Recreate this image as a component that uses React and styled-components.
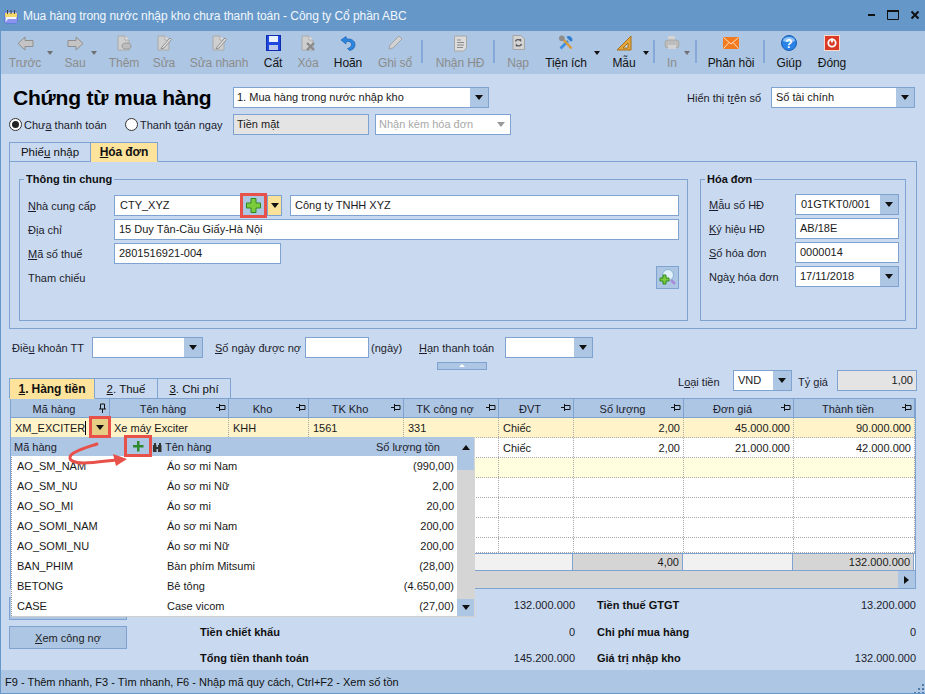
import React from "react";
import styled, { createGlobalStyle } from "styled-components";

const BORDER = "#7ea3d0";
const BAR = "#acc6e3";
const BODY = "#c9daf0";
const RED = "#e8504a";

const Global = createGlobalStyle`
  html, body { margin: 0; padding: 0; background: ${BODY}; }
  * { box-sizing: border-box; }
  u { text-underline-offset: 1px; }
`;

const Win = styled.div`
  width: 925px; height: 694px; display: flex; flex-direction: column; overflow: hidden;
  border-left: 1px solid #6597c8; border-bottom: 1px solid #6597c8;
  background: ${BODY}; color: #1a1a1a;
  font: 11px/14px "Liberation Sans", Arial, sans-serif;
`;
const TitleBar = styled.div`
  height: 31px; flex: none; background: #6597c8; color: #f2f7fd; display: flex; align-items: center;
  padding: 1px 0 0 3px; font-size: 12px; letter-spacing: -.06px;
`;
const TitleText = styled.span` margin-left: 5px; `;
const WinControls = styled.div` margin-left: auto; display: flex; align-items: center; gap: 11px; padding-right: 5px; margin-top: -3px; `;

const Toolbar = styled.div` height: 43px; flex: none; background: ${BAR}; display: flex; `;
const ToolBtn = styled.div`
  position: relative; width: ${p => p.$w}px; margin-left: ${p => p.$ml}px; flex: none;
  display: flex; flex-direction: column; align-items: center; padding-top: 3px;
  color: ${p => (p.$off ? "#8c8c8c" : "#141414")};
`;
const ToolIcon = styled.div` height: 22px; padding-top: 1px; display: flex; align-items: flex-start; justify-content: center; `;
const ToolLabel = styled.div` white-space: nowrap; line-height: 14px; font-size: 12px; letter-spacing: -.1px; `;
const ToolCaret = styled.i`
  position: absolute; left: ${p => p.$x}px; top: 20px; width: 0; height: 0;
  border-left: 3.5px solid transparent; border-right: 3.5px solid transparent;
  border-top: 4px solid ${p => (p.$off ? "#707070" : "#111")};
`;
const ToolSep = styled.div` width: 2px; height: 23px; margin: 9px 0 0 ${p => p.$ml}px; background: #84a9d8; flex: none; `;

const Main = styled.div`
  flex: 1; min-height: 0; padding: 13px 8px 0; display: flex; flex-direction: column;
  & > * { flex-shrink: 0; }
`;
const HeadRow = styled.div` display: grid; grid-template-columns: 224px 256px 1fr; height: 21px; align-items: center; `;
const PageTitle = styled.h1` margin: 0 0 0 4px; font: bold 21px/21px "Liberation Sans", Arial, sans-serif; letter-spacing: -.2px; color: #000; white-space: nowrap; `;
const RightGroup = styled.div` display: flex; justify-content: flex-end; align-items: center; padding-right: 2px; `;
const Label = styled.span`
  display: inline-block; flex: none; white-space: nowrap;
  width: ${p => (p.$w ? `${p.$w}px` : "auto")}; margin-left: ${p => p.$ml || 0}px; color: #1c1c2c;
`;
const PushedLabel = styled(Label)` margin-left: auto; `;
const OptRow = styled.div` display: flex; align-items: center; height: 21px; margin-top: 6px; `;
const Radio = styled.span`
  width: 13px; height: 13px; flex: none; border-radius: 50%; border: 1px solid #333; background: #fff;
  margin-left: ${p => p.$ml || 0}px; margin-right: 2px; display: flex; align-items: center; justify-content: center;
  &::after { content: ""; width: 7px; height: 7px; border-radius: 50%; background: ${p => (p.$on ? "#222" : "transparent")}; }
`;

const Field = styled.div`
  display: flex; align-items: stretch; flex: none; height: ${p => p.$h || 21}px; width: ${p => p.$w}px;
  margin-left: ${p => p.$ml || 0}px; border: 1px solid ${BORDER};
  background: ${p => (p.$gray ? "#e4e4e4" : "#fff")};
  color: ${p => (p.$dim ? "#a8a8a8" : "#1a1a1a")};
`;
const FieldText = styled.span`
  flex: 1; min-width: 0; padding: 0 ${p => (p.$right ? 3 : 4)}px 0 ${p => p.$pl ?? 4}px; line-height: ${p => p.$lh || 19}px;
  white-space: nowrap; overflow: hidden; text-align: ${p => (p.$right ? "right" : "left")};
`;
const Arrow = styled.span`
  width: ${p => p.$w || 18}px; flex: none; background: ${p => p.$bg || BAR}; display: flex; align-items: center; justify-content: center;
  &::after { content: ""; width: 0; height: 0; border-left: 4px solid transparent; border-right: 4px solid transparent; border-top: 5px solid ${p => p.$c || "#111"}; }
`;

const TabStrip = styled.div` display: flex; align-items: flex-end; height: ${p => p.$h || 19}px; margin-top: ${p => p.$mt || 0}px; position: relative; z-index: 1; `;
const Tab = styled.div`
  width: ${p => p.$w}px; height: ${p => p.$h || 20}px; margin-bottom: -1px; display: flex; align-items: center; justify-content: center;
  border: 1px solid ${BORDER}; border-left-width: ${p => (p.$first ? 1 : 0)}px;
  background: ${p => (p.$on ? "#fde39b" : BODY)}; font-weight: ${p => (p.$on ? "bold" : "normal")}; color: #111;
  font-size: ${p => (p.$on ? 12 : 11.5)}px; letter-spacing: ${p => (p.$on ? "-.1px" : "0")};
  ${p => p.$on && "border-bottom-color: #fde39b;"}
`;
const TabPanel = styled.div`
  height: 168px; border: 1px solid ${BORDER}; padding: 17px 9px 0; display: flex; gap: 12px;
`;
const Group = styled.div`
  position: relative; width: ${p => p.$w}px; height: 142px; border: 1px solid ${BORDER};
  padding: ${p => p.$pt}px 8px 0; display: flex; flex-direction: column; gap: 3px;
`;
const Legend = styled.span` position: absolute; left: 4px; top: -8px; padding: 0 2px; background: ${BODY}; font-weight: bold; color: #101010; line-height: 14px; `;
const FormRow = styled.div` display: flex; align-items: center; height: 21px; `;
const AddBox = styled.span`
  width: 27px; height: 25px; margin: -2px 0 -2px -1px; flex: none; border: 3px solid ${RED}; background: ${BAR};
  position: relative; z-index: 1; display: flex; align-items: center; justify-content: center;
`;
const SearchBtn = styled.span`
  width: 23px; height: 23px; margin: -1px 0 -1px auto; border: 1px solid ${BORDER}; background: ${BAR};
  display: flex; align-items: center; justify-content: center;
`;

const PayRow = styled.div` display: flex; align-items: center; height: 21px; margin-top: 8px; padding-left: 3px; `;
const CollapseBar = styled.div`
  width: 50px; height: 8px; margin: 4px 0 0 428px; background: ${BAR}; border: 1px solid ${BORDER}; display: flex; justify-content: center; padding-top: 1px;
  &::after { content: ""; width: 0; height: 0; border-left: 3px solid transparent; border-right: 3px solid transparent; border-bottom: 3px solid #fff; }
`;
const GridHead = styled.div` display: flex; height: 28px; `;
const CurrencyGroup = styled.div` margin-left: auto; display: flex; align-items: flex-start; `;
const CurLabel = styled(Label)` margin-top: 5px; `;

const DataGrid = styled.div`
  position: relative; width: 906px; height: 191px; margin-left: 1px; border: 1px solid ${BORDER}; background: #fff;
`;
const COLS = "99px 119px 80px 95px 95px 75px 110px 110px 121px";
const HeaderRow = styled.div` display: grid; grid-template-columns: ${COLS}; height: 19px; background: ${BAR}; border-bottom: 1px solid ${BORDER}; `;
const HeadCell = styled.div`
  border-right: 1px solid ${BORDER}; position: relative; display: flex; align-items: center; justify-content: center; padding: 1px 12px 0 0; color: #1c1c2c;
`;
const PinWrap = styled.span` position: absolute; right: 2px; top: 4px; display: flex; `;
const Row = styled.div`
  display: grid; grid-template-columns: ${COLS}; height: ${p => p.$h || 20}px; background: ${p => p.$bg || "#fff"};
  border-bottom: 1px dotted #a9a9a9;
`;
const Cell = styled.div`
  position: relative; border-right: 1px dotted #a9a9a9; padding: 0 3px 0 4px; line-height: 21px; white-space: nowrap;
  text-align: ${p => (p.$right ? "right" : "left")}; color: #1a1a1a;
`;
const TextCursor = styled.i` display: inline-block; width: 1px; height: 14px; background: #000; vertical-align: -3px; `;
const CaretBox = styled.span`
  position: absolute; left: 78px; top: -2px; width: 22px; height: 22px; border: 3px solid ${RED}; background: #e6cf85; z-index: 3;
  display: flex; align-items: center; justify-content: center;
  &::after { content: ""; width: 0; height: 0; border-left: 4px solid transparent; border-right: 4px solid transparent; border-top: 5px solid #111; }
`;
const FootRow = styled.div`
  display: grid; grid-template-columns: 562px 110px 110px 121px; height: 18px; border-top: 1px solid ${BORDER}; border-bottom: 1px solid ${BORDER}; 
`;
const FootCell = styled.div`
  background: ${p => (p.$dark ? "#d5d5d5" : "#f1f1f1")}; border-right: 1px solid ${BORDER}; text-align: right; padding-right: 3px; line-height: 16px;
`;
const HScroll = styled.div` height: 17px; background: #d5d5d5; display: flex; justify-content: flex-end; `;
const ScrollBtn = styled.span`
  width: 17px; height: ${p => p.$h || 17}px; flex: none; background: ${BAR}; display: flex; justify-content: center; align-items: ${p => p.$top ? "flex-start" : "center"};
  padding-top: ${p => p.$top ? 8 : 0}px;
  &::after { content: ""; width: 0; height: 0; ${p => p.$dir === "right"
    ? "border-top: 4px solid transparent; border-bottom: 4px solid transparent; border-left: 5px solid #111;"
    : p.$dir === "up"
      ? "border-left: 4px solid transparent; border-right: 4px solid transparent; border-bottom: 5px solid #111;"
      : "border-left: 4px solid transparent; border-right: 4px solid transparent; border-top: 5px solid #111;"} }
`;

const Drop = styled.div`
  position: absolute; left: 0; top: 38px; width: 464px; height: 180px; z-index: 2;
  display: grid; grid-template-columns: 446px 18px; background: #fff; border-bottom: 1px solid #cfcfcf;
`;
const DropMain = styled.div` display: flex; flex-direction: column; border-left: 1px dotted #9a9a9a; `;
const DropHead = styled.div` height: 19px; flex: none; background: ${BAR}; display: flex; align-items: center; padding: 1px 17px 0 3px; margin-left: -1px; color: #1c1c2c; `;
const PlusBox = styled.span`
  width: 28px; height: 22px; margin: -4px 0 -2px; flex: none; border: 3px solid ${RED}; background: ${BAR}; display: flex; align-items: center; justify-content: center;
`;
const DropList = styled.div` flex: 1; `;
const DropRow = styled.div` display: grid; grid-template-columns: 150px 1fr auto; height: 20px; line-height: 20px; padding: 0 3px 0 5px; color: #1a1a1a; `;
const DropScroll = styled.div` display: flex; flex-direction: column; background: #d5d5d5; `;
const Track = styled.div` flex: 1; `;
const Swoosh = styled.svg` position: absolute; left: 55px; top: 4px; z-index: 4; `;

const BottomArea = styled.div` display: flex; height: 81px; `;
const SideButtons = styled.div` width: 118px; flex: none; display: flex; flex-direction: column; gap: 6px; padding-top: 8px; `;
const SideBtn = styled.div` height: 23px; background: ${BAR}; border: 1px solid ${BORDER}; display: flex; align-items: center; justify-content: center; color: #222; `;
const Totals = styled.div`
  margin: 3px 0 0 73px; display: grid; grid-template-columns: 375px 319px; column-gap: 22px; grid-auto-rows: 26.5px; align-items: center;
`;
const TotalItem = styled.div` display: flex; justify-content: space-between; `;
const TotalLabel = styled.span` font-weight: bold; color: #101010; `;
const TotalValue = styled.span` color: #1c1c2c; `;
const StatusBar = styled.div` height: 23px; flex: none; background: ${BAR}; padding-left: 4px; display: flex; align-items: center; position: relative; color: #111; `;
const Grip = styled.svg` position: absolute; right: 1px; bottom: 0; `;

/* ---- drawings ---- */
const Svg = ({ w = 16, h = 16, vb, children }) => <svg width={w} height={h} viewBox={vb || `0 0 ${w} ${h}`}>{children}</svg>;
const G = "#c4c4c4", GS = "#8f8f8f";

const ArrowL = () => <Svg w={17} h={16}><path d="M1 8.500 8 2v3.500h8v6H8V15z" fill={G} stroke={GS} /></Svg>;
const ArrowR = () => <Svg w={17} h={16}><path d="M16 8.500 9 2v3.500H1v6h8V15z" fill={G} stroke={GS} /></Svg>;
const PageBase = ({ children }) => <Svg w={16} h={16}><path d="M2 1h7l4 4v10H2z" fill="#cfcfcf" stroke="#aaa" /><path d="M9 1v4h4" fill="#eee" stroke="#aaa" />{children}</Svg>;
const IcoAdd = () => <PageBase><ellipse cx="10.500" cy="11" rx="4.500" ry="3" fill="#bdbdbd" stroke="#999" /></PageBase>;
const IcoEdit = () => <PageBase><path d="M6 12 14 3l1.500 1.500L8 13l-3 1z" fill="#e2e2e2" stroke="#8f8f8f" /></PageBase>;
const IcoDelete = () => <PageBase><path d="m7 8 7 7m0-7-7 7" stroke="#8a8a8a" strokeWidth="2.400" /></PageBase>;
const IcoSave = () => <Svg w={15} h={16}><rect x=".5" y=".5" width="14" height="15" fill="#2047e0" stroke="#0d2cb0" /><rect x="3" y="1" width="9" height="6" fill="#eaf2ff" /><rect x="3" y="10" width="9" height="5" fill="#b9c8ea" /></Svg>;
const IcoUndo = () => <Svg w={16} h={16}><path d="M6 1.500 1 5l5 4V6.500c3.500-.5 6 1 5.500 3.500-.3 2-2 3-4 3.500l2 2c3.500-.5 5.500-3 5.500-6 0-4-4-6-8.500-5.500z" fill="#2b86de" stroke="#1a5fb4" strokeWidth=".7" /></Svg>;
const IcoPencil = () => <Svg w={16} h={16}><path d="M2 14l1-4 9-9 3 3-9 9z" fill="#d2d2d2" stroke="#a4a4a4" /></Svg>;
const IcoDoc = () => <Svg w={15} h={17}><path d="M1.500 1h12v12l-3 3h-9z" fill="#dcdcdc" stroke="#a8a8a8" /><path d="M4 5h4M4 7.500h7M4 10h7M4 12.500h6" stroke="#8a8a8a" /></Svg>;
const IcoReload = () => <Svg w={13} h={15}><path d="M1 .5h8l3.500 3.500v10.500H1z" fill="#d4d4d4" stroke="#a4a4a4" /><path d="M3.500 6.500c.5-2 3-2.500 5-1v-1.500M9.500 9c-.5 2-3 2.500-5 1v1.500" fill="none" stroke="#5a5a5a" strokeWidth="1.400" /></Svg>;
const IcoTools = () => <Svg w={16} h={16}><path d="M2.500 13.500 10 6" stroke="#3f8fe0" strokeWidth="2.600" /><path d="M9 2.500a3 3 0 0 1 4.500 3.500M13.500 6l-3.500-3.500" stroke="#2f7dd0" strokeWidth="1.800" fill="none" /><path d="m4 3 9.500 10.500" stroke="#d99a3a" strokeWidth="2.400" /><circle cx="3.800" cy="3.200" r="2.800" fill="#8d8d8d" /></Svg>;
const IcoRuler = () => <Svg w={16} h={16}><path d="M15 1v14H1z" fill="#e3a63c" stroke="#a8701a" /><path d="M12 8v5H7z" fill="#c9dbef" stroke="#a8701a" /></Svg>;
const IcoPrinter = () => <Svg w={16} h={15}><path d="M4 1h7v5H4z" fill="#d4d4d4" /><rect x="1" y="5" width="14" height="8" rx="3" fill="#bdbdbd" stroke="#a8a8a8" /><rect x="4" y="10" width="8" height="4" fill="#d2d2d2" /></Svg>;
const IcoMail = () => <Svg w={16} h={14}><g transform="translate(0 2)"><rect width="16" height="12" fill="#f27a1f" /><path d="M.5.500 8 7l7.500-6.500M.5 11.500 6 5.500M15.500 11.500 10 5.500" stroke="#ffe3c4" fill="none" /></g></Svg>;
const IcoHelp = () => <Svg w={16} h={16}><circle cx="8" cy="8" r="7.500" fill="#2a82e6" stroke="#1a5fb4" /><path d="M2 6a6 4 0 0 1 12 0c-3 1.500-9 1.500-12 0z" fill="#8fc4f5" /><text x="8" y="12.500" textAnchor="middle" fontSize="12" fontWeight="bold" fontFamily="Liberation Sans" fill="#fff">?</text></Svg>;
const IcoClose = () => <Svg w={16} h={16}><rect x=".5" y=".5" width="15" height="15" fill="#d93a22" stroke="#fbd9d0" /><circle cx="8" cy="8" r="3.700" fill="none" stroke="#fff" strokeWidth="1.800" /><path d="M8 3.500v4" stroke="#fff" strokeWidth="1.800" /></Svg>;
const Plus = () => <Svg w={17} h={17}><path d="M6 1.500h5v4.500h4.500v5H11v4.500H6V11H1.500V6H6z" fill="#7ccb3d" stroke="#2f8a1e" /></Svg>;
const SmallPlus = () => <Svg w={12} h={12}><path d="M5 1h2.500v4H11.500v2.500H7.500v4H5v-4H1V5h4z" fill="#2f8a2e" /></Svg>;
const Binoc = () => <Svg w={11} h={11}><path d="M1 3h3.500v7H1zM6 3h3.500v7H6zM2 1h2v2H2zM7 1h2v2H7zM4 5h3v2H4z" fill="#333" /></Svg>;
const SearchPlus = () => <Svg w={19} h={19}><circle cx="10" cy="7" r="5.500" fill="#dff0fb" stroke="#8ab4cf" /><path d="M13 12l4 4" stroke="#a78bd8" strokeWidth="2.500" /><path d="M5 7h3v3h3v3H8v3H5v-3H2v-3h3z" fill="#7ccb3d" stroke="#2f8a1e" /></Svg>;
const Pin = ({ v }) => v
  ? <Svg w={9} h={10}><path d="M1 6h7M4.500 6v4M2.500 6V1h4v5" fill="none" stroke="#111" /></Svg>
  : <Svg w={10} h={9}><path d="M0 4.500h3M3.500 1v7M3.500 2.500H9v4H3.500" fill="none" stroke="#111" /></Svg>;
const AppIcon = () => <Svg w={14} h={15}><rect x="1" y="3" width="12" height="11" rx="1" fill="#f4f4ff" stroke="#5a6fe0" /><path d="M1 4h12v4H1z" fill="#f2d76a" /><path d="M3.500 1v4M7 1v4M10.500 1v4" stroke="#444" /><path d="M1 14 4 10h9v4z" fill="#8b93ee" /></Svg>;

const tools = [
  { l: "Trước", w: 44, ml: 2, off: 1, ic: <ArrowL />, c: 43.5 },
  { l: "Sau", w: 34, ml: 11, off: 1, ic: <ArrowR />, c: 32.5 },
  { l: "Thêm", w: 40, ml: 12, off: 1, ic: <IcoAdd /> },
  { l: "Sửa", w: 36, ml: 2, off: 1, ic: <IcoEdit /> },
  { l: "Sửa nhanh", w: 70, ml: 2, off: 1, ic: <IcoEdit /> },
  { l: "Cất", w: 34, ml: 2, ic: <IcoSave /> },
  { l: "Xóa", w: 34, ml: 1, off: 1, ic: <IcoDelete /> },
  { l: "Hoãn", w: 40, ml: 3, ic: <IcoUndo /> },
  { l: "Ghi sổ", w: 46, ml: 4, off: 1, ic: <IcoPencil /> },
  { sep: 3 },
  { l: "Nhận HĐ", w: 64, ml: 5, off: 1, ic: <IcoDoc /> },
  { sep: 1 },
  { l: "Nạp", w: 44, ml: 1, off: 1, ic: <IcoReload /> },
  { l: "Tiện ích", w: 48, ml: 2, ic: <IcoTools />, c: 51.5 },
  { l: "Mẫu", w: 44, ml: 12, ic: <IcoRuler />, c: 41 },
  { sep: 7 },
  { l: "In", w: 28, ml: 3, off: 1, ic: <IcoPrinter />, c: 26 },
  { sep: 9 },
  { l: "Phản hồi", w: 62, ml: 3, ic: <IcoMail /> },
  { sep: 1 },
  { l: "Giúp", w: 42, ml: 3, ic: <IcoHelp /> },
  { l: "Đóng", w: 40, ml: 2, ic: <IcoClose /> },
];

const headers = ["Mã hàng", "Tên hàng", "Kho", "TK Kho", "TK công nợ", "ĐVT", "Số lượng", "Đơn giá", "Thành tiền"];
const dropRows = [
  ["AO_SM_NAM", "Áo sơ mi Nam", "(990,00)"],
  ["AO_SM_NU", "Áo sơ mi Nữ", "2,00"],
  ["AO_SO_MI", "Áo sơ mi", "20,00"],
  ["AO_SOMI_NAM", "Áo sơ mi Nam", "200,00"],
  ["AO_SOMI_NU", "Áo sơ mi Nữ", "200,00"],
  ["BAN_PHIM", "Bàn phím Mitsumi", "(28,00)"],
  ["BETONG", "Bê tông", "(4.650,00)"],
  ["CASE", "Case vicom", "(27,00)"],
];
const emptyRow = (bg, h, k) => (
  <Row key={k} $bg={bg} $h={h}>{headers.map(x => <Cell key={x} />)}</Row>
);

export default function App() {
  return (
    <Win>
      <Global />
      <TitleBar>
        <AppIcon />
        <TitleText>Mua hàng trong nước nhập kho chưa thanh toán - Công ty Cổ phần ABC</TitleText>
        <WinControls>
          <Svg w={8} h={10}><rect y="4" width="7" height="2" fill="#111" /></Svg>
          <Svg w={12} h={11}><path d="M.5 1.500h11v9H.5z" fill="none" stroke="#111" /><rect width="12" height="2" y="1" fill="#111" /></Svg>
          <Svg w={10} h={10}><path d="m1.500 1.500 7 7m0-7-7 7" stroke="#111" strokeWidth="2" /></Svg>
        </WinControls>
      </TitleBar>
      <Toolbar>
        {tools.map((t, i) => t.sep !== undefined ? <ToolSep key={i} $ml={t.sep} /> : (
          <ToolBtn key={t.l} $w={t.w} $ml={t.ml} $off={t.off}>
            <ToolIcon>{t.ic}</ToolIcon>
            <ToolLabel>{t.l}</ToolLabel>
            {t.c && <ToolCaret $x={t.c} $off={t.off} />}
          </ToolBtn>
        ))}
      </Toolbar>
      <Main>
        <HeadRow>
          <PageTitle>Chứng từ mua hàng</PageTitle>
          <Field $w={256}><FieldText $pl={3}>1. Mua hàng trong nước nhập kho</FieldText><Arrow /></Field>
          <RightGroup>
            <Label $w={84}>Hiển thị t<u>r</u>ên số</Label>
            <Field $w={144}><FieldText>Sổ tài chính</FieldText><Arrow /></Field>
          </RightGroup>
        </HeadRow>
        <OptRow>
          <Radio $on />
          <Label $w={99}>Chư<u>a</u> thanh toán</Label>
          <Radio $ml={2} />
          <Label $w={93}>Thanh t<u>o</u>án ngay</Label>
          <Field $w={136} $gray><FieldText $pl={3}>Tiền mặt</FieldText></Field>
          <Field $w={136} $ml={6} $dim><FieldText $pl={3}>Nhận kèm hóa đơn</FieldText><Arrow $bg="#fff" $c="#9a9a9a" /></Field>
        </OptRow>
        <TabStrip $mt={7}>
          <Tab $w={82} $first><span>Phiế<u>u</u> nhập</span></Tab>
          <Tab $w={67} $on><span><u>H</u>óa đơn</span></Tab>
        </TabStrip>
        <TabPanel>
          <Group $w={669} $pt={15}>
            <Legend>Thông tin chung</Legend>
            <FormRow>
              <Label $w={86}><u>N</u>hà cung cấp</Label>
              <Field $w={127}><FieldText $pl={5}>CTY_XYZ</FieldText></Field>
              <AddBox><Plus /></AddBox>
              <Field $w={15}><Arrow $w={13} $bg="#f9e199" /></Field>
              <Field $w={389} $ml={8}><FieldText>Công ty TNHH XYZ</FieldText></Field>
            </FormRow>
            <FormRow>
              <Label $w={86}>Đ<u>ị</u>a chỉ</Label>
              <Field $w={565}><FieldText>15 Duy Tân-Cầu Giấy-Hà Nội</FieldText></Field>
            </FormRow>
            <FormRow>
              <Label $w={86}><u>M</u>ã số thuế</Label>
              <Field $w={167}><FieldText>2801516921-004</FieldText></Field>
            </FormRow>
            <FormRow>
              <Label>Tham chiếu</Label>
              <SearchBtn><SearchPlus /></SearchBtn>
            </FormRow>
          </Group>
          <Group $w={206} $pt={14}>
            <Legend>Hóa đơn</Legend>
            <FormRow>
              <Label $w={86}><u>M</u>ẫu số HĐ</Label>
              <Field $w={104}><FieldText $pl={5}>01GTKT0/001</FieldText><Arrow /></Field>
            </FormRow>
            <FormRow>
              <Label $w={86}><u>K</u>ý hiệu HĐ</Label>
              <Field $w={104}><FieldText>AB/18E</FieldText></Field>
            </FormRow>
            <FormRow>
              <Label $w={86}><u>S</u>ố hóa đơn</Label>
              <Field $w={104}><FieldText>0000014</FieldText></Field>
            </FormRow>
            <FormRow>
              <Label $w={86}>Ngà<u>y</u> hóa đơn</Label>
              <Field $w={104}><FieldText>17/11/2018</FieldText><Arrow /></Field>
            </FormRow>
          </Group>
        </TabPanel>
        <PayRow>
          <Label $w={80}>Điề<u>u</u> khoản TT</Label>
          <Field $w={111}><FieldText /><Arrow /></Field>
          <Label $w={90} $ml={12}><u>S</u>ố ngày được nợ</Label>
          <Field $w={64}><FieldText /></Field>
          <Label $w={48} $ml={2}>(ngày)</Label>
          <Label $w={86}><u>H</u>ạn thanh toán</Label>
          <Field $w={88}><FieldText /><Arrow /></Field>
        </PayRow>
        <CollapseBar />
        <GridHead>
          <TabStrip $h={28}>
            <Tab $w={86} $h={21} $first $on><span><u>1</u>. Hàng tiền</span></Tab>
            <Tab $w={63} $h={21}><span><u>2</u>. Thuế</span></Tab>
            <Tab $w={73} $h={21}><span><u>3</u>. Chi phí</span></Tab>
          </TabStrip>
          <CurrencyGroup>
            <CurLabel $w={55}>L<u>o</u>ại tiền</CurLabel>
            <Field $w={59}><FieldText>VND</FieldText><Arrow /></Field>
            <CurLabel $w={39} $ml={6}>Tỷ <u>g</u>iá</CurLabel>
            <Field $w={80} $gray><FieldText $right>1,00</FieldText></Field>
          </CurrencyGroup>
        </GridHead>
        <DataGrid>
          <HeaderRow>
            {headers.map((h, i) => (
              <HeadCell key={h}>{h}<PinWrap><Pin v={i === 0} /></PinWrap></HeadCell>
            ))}
          </HeaderRow>
          <Row $bg="#fef3c9">
            <Cell>XM_EXCITER<TextCursor /><CaretBox /></Cell>
            <Cell>Xe máy Exciter</Cell><Cell>KHH</Cell><Cell>1561</Cell><Cell>331</Cell><Cell>Chiếc</Cell>
            <Cell $right>2,00</Cell><Cell $right>45.000.000</Cell><Cell $right>90.000.000</Cell>
          </Row>
          <Row>
            <Cell /><Cell /><Cell /><Cell /><Cell /><Cell>Chiếc</Cell>
            <Cell $right>2,00</Cell><Cell $right>21.000.000</Cell><Cell $right>42.000.000</Cell>
          </Row>
          {emptyRow("#ffffdf", 20, "a")}
          {emptyRow("#fff", 20, "b")}
          {emptyRow("#fff", 20, "c")}
          {emptyRow("#fff", 20, "d")}
          {emptyRow("#fff", 15, "e")}
          <FootRow>
            <FootCell />
            <FootCell $dark>4,00</FootCell>
            <FootCell />
            <FootCell $dark>132.000.000</FootCell>
          </FootRow>
          <HScroll><ScrollBtn $dir="right" /></HScroll>
          <Drop>
            <DropMain>
              <DropHead>
                <Label $w={110}>Mã hàng</Label>
                <PlusBox><SmallPlus /></PlusBox>
                <Binoc />
                <Label $ml={2}>Tên hàng</Label>
                <PushedLabel>Số lượng tồn</PushedLabel>
              </DropHead>
              <DropList>
                {dropRows.map(r => (
                  <DropRow key={r[0]}><span>{r[0]}</span><span>{r[1]}</span><span>{r[2]}</span></DropRow>
                ))}
              </DropList>
            </DropMain>
            <DropScroll>
              <ScrollBtn $dir="up" $h={33} $top />
              <Track />
              <ScrollBtn $dir="down" />
            </DropScroll>
            <Swoosh width="65" height="28" viewBox="66 441 65 28">
              <path d="M97 444C88 447 76 450 71 455 67 460 74 463 84 463 94 463 106 461 116 460" fill="none" stroke={RED} strokeWidth="3" strokeLinecap="round" />
              <path d="M127 459 113 454 116 466z" fill={RED} />
            </Swoosh>
          </Drop>
        </DataGrid>
        <BottomArea>
          <SideButtons>
            <SideBtn />
            <SideBtn><span><u>X</u>em công nợ</span></SideBtn>
          </SideButtons>
          <Totals>
            <TotalItem><span /><TotalValue>132.000.000</TotalValue></TotalItem>
            <TotalItem><TotalLabel>Tiền thuế GTGT</TotalLabel><TotalValue>13.200.000</TotalValue></TotalItem>
            <TotalItem><TotalLabel>Tiền chiết khấu</TotalLabel><TotalValue>0</TotalValue></TotalItem>
            <TotalItem><TotalLabel>Chi phí mua hàng</TotalLabel><TotalValue>0</TotalValue></TotalItem>
            <TotalItem><TotalLabel>Tổng tiền thanh toán</TotalLabel><TotalValue>145.200.000</TotalValue></TotalItem>
            <TotalItem><TotalLabel>Giá trị nhập kho</TotalLabel><TotalValue>132.000.000</TotalValue></TotalItem>
          </Totals>
        </BottomArea>
      </Main>
      <StatusBar>
        F9 - Thêm nhanh, F3 - Tìm nhanh, F6 - Nhập mã quy cách, Ctrl+F2 - Xem số tồn
        <Grip width="10" height="10"><path d="M8 1h2v2H8zM4 5h2v2H4zM8 5h2v2H8zM0 9h2v1H0zM4 9h2v1H4zM8 9h2v1H8z" fill="#4f79a8" /></Grip>
      </StatusBar>
    </Win>
  );
}
